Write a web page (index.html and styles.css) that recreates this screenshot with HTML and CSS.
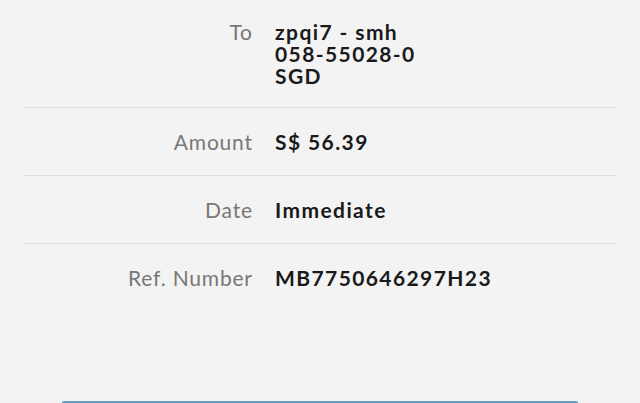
FILE: index.html
```html
<!DOCTYPE html>
<html lang="en">
<head>
    <meta charset="UTF-8">
    <meta name="viewport" content="width=device-width, initial-scale=1.0">
    <title>Transfer Review</title>
    <link rel="stylesheet" href="styles.css">
</head>
<body>
    <div class="details">
        <div class="row first">
            <div class="label">To</div>
            <div class="value">
                <div>zpqi7 - smh</div>
                <div>058-55028-0</div>
                <div>SGD</div>
            </div>
        </div>
        <div class="row">
            <div class="label">Amount</div>
            <div class="value">S$ 56.39</div>
        </div>
        <div class="row">
            <div class="label">Date</div>
            <div class="value">Immediate</div>
        </div>
        <div class="row last">
            <div class="label">Ref. Number</div>
            <div class="value">MB7750646297H23</div>
        </div>
    </div>
    <div class="actions">
        <button class="confirm" type="button" aria-label="Confirm"></button>
    </div>
</body>
</html>
```

FILE: styles.css
```css
html, body {
    height: 100%;
}
body {
    margin: 0;
    padding: 0;
    background-color: #f3f3f3;
    font-family: Lato, "Open Sans", sans-serif;
    overflow: hidden;
}
.details {
    margin: 0 25px;
}
.row {
    display: grid;
    grid-template-columns: 227px 1fr;
    column-gap: 23px;
    padding: 23px 0 22px;
    border-bottom: 1px solid #dcdcdc;
}
.row.first {
    padding-top: 21px;
    padding-bottom: 20px;
}
.row.last {
    border-bottom: none;
}
.label {
    text-align: right;
    color: #777;
    font-size: 21px;
    line-height: 22px;
    letter-spacing: 0.8px;
    margin-right: -0.8px;
}
.value {
    color: #1a1a1a;
    font-size: 21px;
    font-weight: bold;
    line-height: 22px;
    letter-spacing: 1.4px;
}
.actions {
    padding: 0 62px;
    margin-top: 90px;
}
.confirm {
    display: block;
    width: 100%;
    height: 46px;
    border: none;
    border-radius: 2px;
    background: #6a9bbd;
}
```
